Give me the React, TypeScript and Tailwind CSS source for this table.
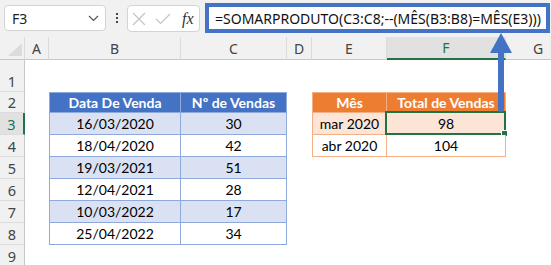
import React from "react";

type Row = {
  n: number;
  h: string;
  b?: React.ReactNode;
  c?: React.ReactNode;
  e?: React.ReactNode;
  f?: React.ReactNode;
  bCls?: string;
  cCls?: string;
  eCls?: string;
  fCls?: string;
};

const sales = [
  ["16/03/2020", "30"],
  ["18/04/2020", "42"],
  ["19/03/2021", "51"],
  ["12/04/2021", "28"],
  ["10/03/2022", "17"],
  ["25/04/2022", "34"],
];

const blueBody = "border-b border-[#8ea9db]";
const orangeBody = "border-b border-[#f4b084]";

function buildRows(): Row[] {
  const rows: Row[] = [{ n: 1, h: "h-[32px]" }];
  rows.push({
    n: 2,
    h: "h-[21px]",
    b: "Data De Venda",
    c: "Nº de Vendas",
    bCls: "bg-[#4472c4] text-white font-bold text-[14.5px] border-t border-b border-l border-r border-[#8ea9db]",
    cCls: "bg-[#4472c4] text-white font-bold text-[14.5px] border-t border-b border-r border-[#8ea9db]",
    e: "Mês",
    f: "Total de Vendas",
    eCls: "bg-[#ed7d31] text-white font-bold text-[14.5px] border-t border-b border-l border-r border-[#f4b084]",
    fCls: "bg-[#ed7d31] text-white font-bold text-[14.5px] border-t border-b border-r border-[#f4b084]",
  });
  sales.forEach(([d, v], i) => {
    const fill = i % 2 === 0 ? "bg-[#d9e1f2]" : "bg-white";
    const r: Row = {
      n: i + 3,
      h: "h-[22px]",
      b: d,
      c: v,
      bCls: `${fill} ${blueBody} border-l border-r`,
      cCls: `${fill} ${blueBody} border-r`,
    };
    if (i === 0) {
      r.e = "mar 2020";
      r.f = "98";
      r.eCls = `bg-[#fce4d6] ${orangeBody} border-l border-r`;
      r.fCls = `bg-[#fce4d6] ${orangeBody} border-r`;
    }
    if (i === 1) {
      r.e = "abr 2020";
      r.f = "104";
      r.eCls = `bg-white ${orangeBody} border-l border-r`;
      r.fCls = `bg-white ${orangeBody} border-r`;
    }
    rows.push(r);
  });
  rows.push({ n: 9, h: "h-[22px]" });
  return rows;
}

const colHeads: { label: string; w: string; active?: boolean }[] = [
  { label: "A", w: "w-[24px]" },
  { label: "B", w: "w-[132px]" },
  { label: "C", w: "w-[106px]" },
  { label: "D", w: "w-[25px]" },
  { label: "E", w: "w-[75px]" },
  { label: "F", w: "w-[119px]", active: true },
];

function Cell({
  w,
  cls = "",
  children,
  selected,
}: {
  w: string;
  cls?: string;
  children?: React.ReactNode;
  selected?: boolean;
}) {
  return (
    <div
      className={`${w} shrink-0 relative flex items-center justify-center whitespace-nowrap text-[14px] text-black ${cls}`}
    >
      {children}
      {selected && (
        <div className="absolute left-[-2px] top-[-2px] w-[121px] h-[24px] border-2 border-[#217346] pointer-events-none">
          <div className="absolute right-[-3px] bottom-[-3px] w-[5px] h-[5px] bg-[#217346] outline outline-1 outline-white" />
        </div>
      )}
    </div>
  );
}

function Toolbar() {
  return (
    <div className="flex h-[37px] bg-[#f1f1f1] font-['Noto_Sans',sans-serif]">
      {/* name box */}
      <div className="mt-[5px] ml-[4px] h-[26px] w-[102px] rounded-[4px] border border-[#d4d4d4] bg-white flex items-center justify-between pl-[7px] pr-[6px]">
        <span className="text-[14px] text-[#222]">F3</span>
        <svg width="11" height="7" viewBox="0 0 11 7">
          <path d="M1 1 L5.5 5.5 L10 1" fill="none" stroke="#555" strokeWidth="1.2" />
        </svg>
      </div>
      {/* separator dots */}
      <div className="mt-[5px] h-[26px] w-[21px] flex flex-col items-center justify-center gap-[2px]">
        <span className="w-[2px] h-[2px] bg-[#444]" />
        <span className="w-[2px] h-[2px] bg-[#444]" />
        <span className="w-[2px] h-[2px] bg-[#444]" />
      </div>
      {/* cancel / enter / function */}
      <div className="mt-[5px] h-[27px] w-[73px] rounded-[4px] border border-[#d4d4d4] bg-white flex items-center pl-[4px]">
        <svg width="14" height="14" viewBox="0 0 14 14">
          <path d="M1 1 L13 13 M13 1 L1 13" stroke="#c4c4c4" strokeWidth="1.2" />
        </svg>
        <svg width="16" height="12" viewBox="0 0 16 12" className="ml-[9px]">
          <path d="M1 6 L5.5 10.5 L15 1" fill="none" stroke="#c4c4c4" strokeWidth="1.2" />
        </svg>
        <span className="ml-[11px] text-[16px] italic text-[#333] font-['Liberation_Serif',serif] leading-none">
          fx
        </span>
      </div>
      {/* formula */}
      <div className="ml-[5px] mt-[3px] h-[30px] w-[345px] border-4 border-[#4472c4] bg-white flex items-center pl-[6px] text-[14px] text-[#111] whitespace-nowrap">
        =SOMARPRODUTO(C3:C8;--(MÊS(B3:B8)=MÊS(E3)))
      </div>
    </div>
  );
}

function ColumnHeaders() {
  return (
    <div className="flex h-[23px] font-['Noto_Sans',sans-serif] text-[14px]">
      <div className="w-[25px] shrink-0 bg-[#f1f1f1] border-r border-b border-r-[#dcdcdc] border-b-[#c6c6c6] flex items-end justify-end pr-[2px] pb-[3px]">
        <svg width="14" height="13" viewBox="0 0 14 13">
          <path d="M14 0 L14 13 L0 13 Z" fill="#dcdcdc" />
        </svg>
      </div>
      {colHeads.map((c) => (
        <div
          key={c.label}
          className={`${c.w} shrink-0 flex items-center justify-center border-r border-r-[#dcdcdc] ${
            c.active
              ? "bg-[#e1e1e1] text-[#217346] border-b-2 border-b-[#217346]"
              : "bg-[#f1f1f1] text-[#444] border-b border-b-[#c6c6c6]"
          }`}
        >
          {c.label}
        </div>
      ))}
      <div className="flex-1 flex items-center justify-start pl-[27px] bg-[#f1f1f1] text-[#444] border-b border-b-[#c6c6c6]">
        G
      </div>
    </div>
  );
}

function RowHead({ n, active }: { n: number; active?: boolean }) {
  return (
    <div
      className={`w-[25px] shrink-0 flex items-end justify-center leading-[20px] text-[14.5px] font-['Noto_Sans',sans-serif] border-b border-b-[#dcdcdc] ${
        active
          ? "bg-[#e1e1e1] text-[#217346] border-r-2 border-r-[#217346]"
          : "bg-[#f1f1f1] text-[#444] border-r border-r-[#c6c6c6]"
      }`}
    >
      {n}
    </div>
  );
}

function Arrow() {
  return (
    <svg
      className="absolute left-[488px] top-[32px]"
      width="26"
      height="82"
      viewBox="0 0 26 82"
    >
      <path d="M13 1 L24 21 L2 21 Z" fill="#4472c4" />
      <rect x="10" y="18" width="6" height="62" rx="3" fill="#4472c4" />
    </svg>
  );
}

export default function App() {
  const rows = buildRows();
  return (
    <div className="relative w-[551px] h-[265px] overflow-hidden bg-white">
      <Toolbar />
      <ColumnHeaders />
      <div className="font-['Lato',sans-serif]">
        {rows.map((r) => (
          <div key={r.n} className={`flex ${r.h}`}>
            <RowHead n={r.n} active={r.n === 3} />
            <Cell w="w-[24px]" />
            <Cell w="w-[132px]" cls={r.bCls}>
              {r.b}
            </Cell>
            <Cell w="w-[106px]" cls={r.cCls}>
              {r.c}
            </Cell>
            <Cell w="w-[25px]" />
            <Cell w="w-[75px]" cls={r.eCls}>
              {r.e}
            </Cell>
            <Cell w="w-[119px]" cls={r.fCls} selected={r.n === 3}>
              {r.f}
            </Cell>
            <div className="flex-1" />
          </div>
        ))}
      </div>
      <Arrow />
    </div>
  );
}
